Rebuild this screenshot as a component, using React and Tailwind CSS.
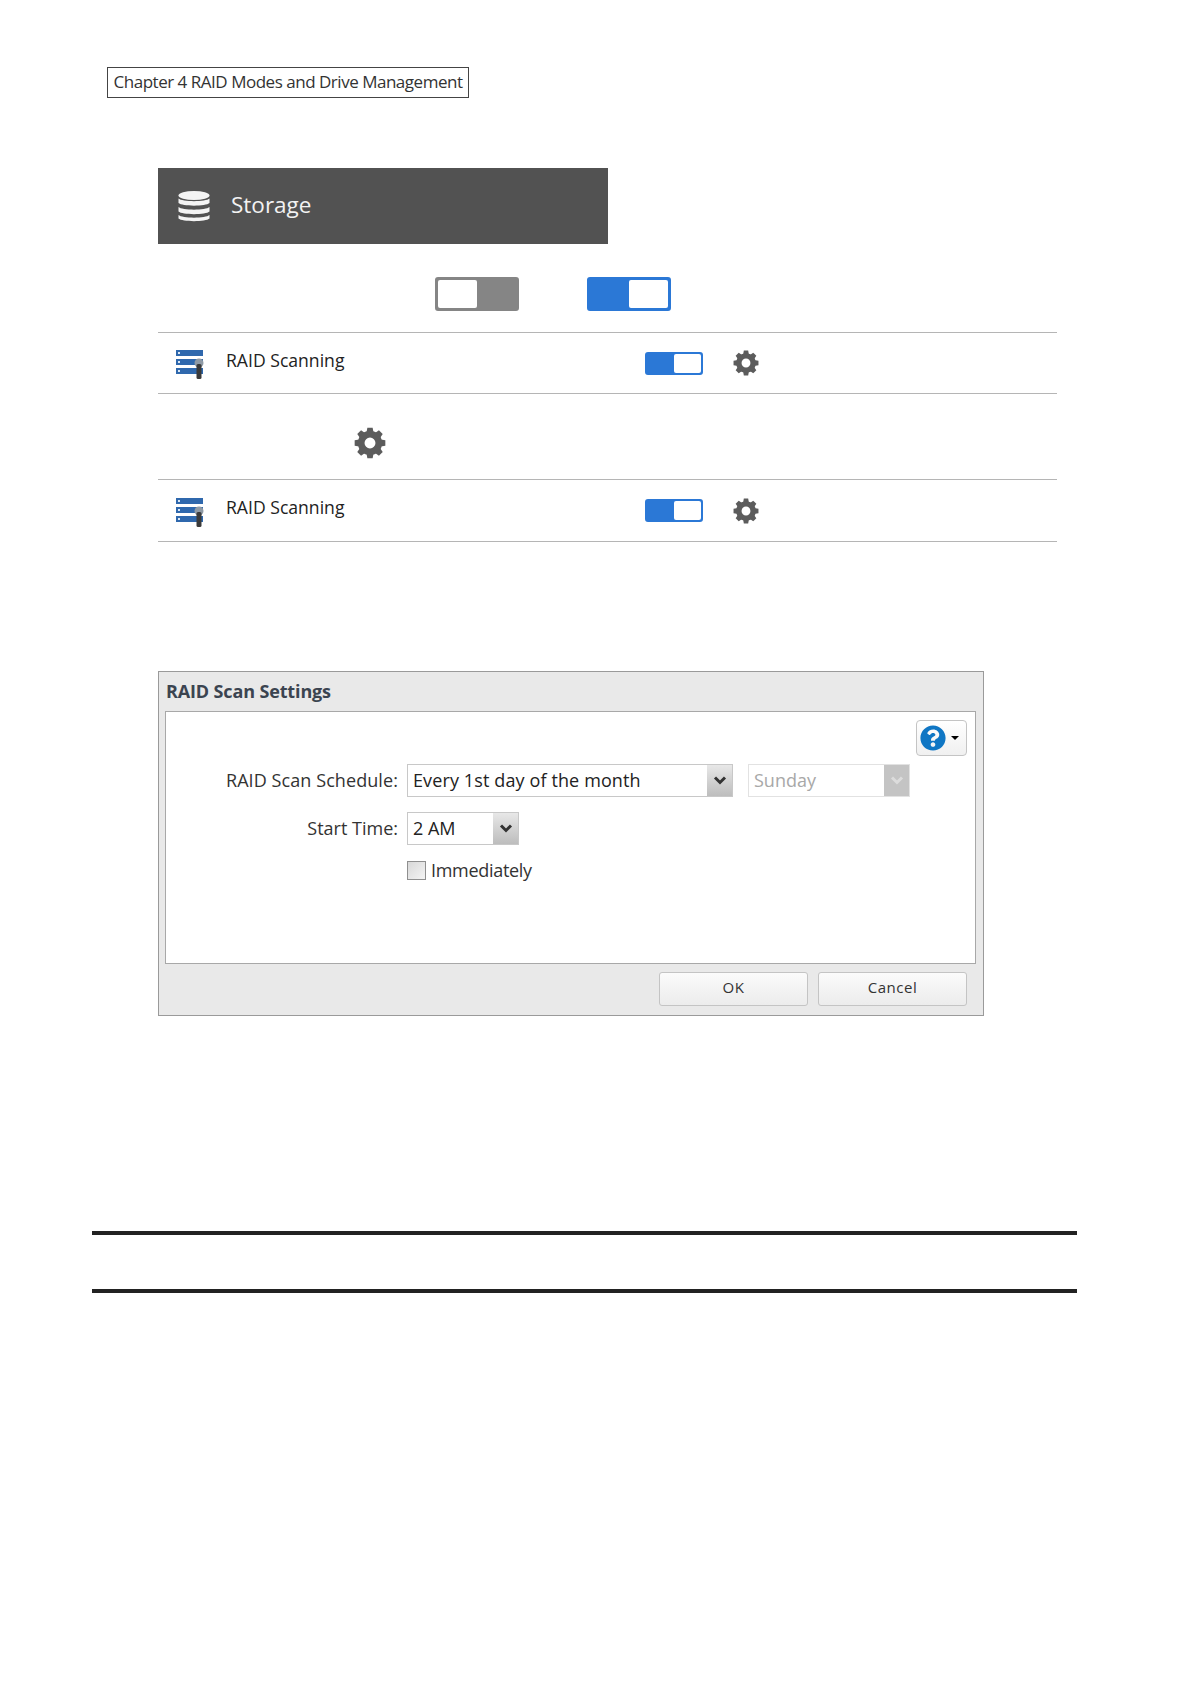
import { FaQuestionCircle } from 'react-icons/fa';

const Toggle = ({ on = true, big = false }) => {
    const size = big ? 'w-[84px] h-[34px] border-[3px]' : 'w-[58px] h-[23px] border-2';
    const color = on ? 'border-[#2b78d6] bg-[#2b78d6]' : 'border-[#858585] bg-[#858585]';
    return (
        <div className={`${size} ${color} flex rounded-[3px] ${on ? 'justify-end' : 'justify-start'}`}>
            <div className="w-1/2 h-full bg-white rounded-[2px]"></div>
        </div>
    );
};

const Gear = ({ size }) => (
    <svg width={size} height={size} viewBox="0 0 24 24" fill="#5c5c5c">
        {[0, 45, 90, 135, 180, 225, 270, 315].map((angle) => (
            <path key={angle} d="M10 0.5 H14 L15 6 H9 Z" transform={`rotate(${angle} 12 12)`} />
        ))}
        <circle cx="12" cy="12" r="6.6" fill="none" stroke="#5c5c5c" strokeWidth="5" />
    </svg>
);

const DatabaseIcon = () => (
    <svg width="32" height="32" viewBox="0 0 32 32" fill="#f4f4f4">
        <ellipse cx="16" cy="5.5" rx="15.5" ry="4.5" />
        <path d="M0.5 8.5 C4 12 28 12 31.5 8.5 V13 C28 16.5 4 16.5 0.5 13 Z" />
        <path d="M0.5 17 C4 20.5 28 20.5 31.5 17 V21.5 C28 25 4 25 0.5 21.5 Z" />
        <path d="M0.5 25 C4 28.5 28 28.5 31.5 25 V28.5 C28 32 4 32 0.5 28.5 Z" />
    </svg>
);

const ServerIcon = () => (
    <svg width="30" height="29" viewBox="0 0 30 29">
        <rect x="0" y="0" width="27" height="6" fill="#2f68ad" />
        <rect x="0" y="9" width="27" height="6" fill="#2f68ad" />
        <rect x="0" y="18" width="27" height="6" fill="#2f68ad" />
        <rect x="2" y="2" width="2" height="2" fill="#dce8f5" />
        <rect x="2" y="11" width="2" height="2" fill="#dce8f5" />
        <rect x="2" y="20" width="2" height="2" fill="#dce8f5" />
        <circle cx="23" cy="13" r="4.5" fill="#8f9aa5" />
        <rect x="20.5" y="14" width="5" height="15" rx="1.5" fill="#3a3a3a" />
    </svg>
);

const ScanRow = ({ className }) => (
    <div className={`flex items-center border-b border-[#b5b5b5] pl-[18px] ${className}`}>
        <div className="w-[50px] mt-[3px]"><ServerIcon /></div>
        <span className="w-[419px] text-[17.6px] text-[#222] font-['Open_Sans',sans-serif] mb-[6px]">RAID Scanning</span>
        <Toggle />
        <div className="ml-[30px]"><Gear size={26} /></div>
    </div>
);

const Arrow = ({ color = '#333' }) => (
    <svg width="14" height="9" viewBox="0 0 14 9">
        <path d="M2 1.5 L7 6.5 L12 1.5" fill="none" stroke={color} strokeWidth="3" />
    </svg>
);

const DialogButton = ({ label }) => (
    <button className="w-[149px] h-[34px] pb-[4px] rounded-[3px] border border-[#c4c4c4] bg-gradient-to-b from-[#fbfbfb] to-[#ececec] text-[15px] tracking-[0.5px] text-[#333]">
        {label}
    </button>
);

const App = () => {
    return (
        <div className="w-[1191px] h-[1684px] bg-white pt-[67px] font-['Noto_Sans',sans-serif]">
            <div className="ml-[107px] w-[362px] h-[31px] pb-[2px] border border-[#444] flex items-center justify-center text-[17px] text-[#333] font-['Open_Sans',sans-serif] tracking-[-0.48px] whitespace-nowrap">
                Chapter 4 RAID Modes and Drive Management
            </div>

            <div className="ml-[158px] mt-[70px] w-[899px]">
                <div className="w-[450px] h-[76px] bg-[#525252] flex items-center pl-[20px]">
                    <DatabaseIcon />
                    <span className="ml-[21px] mb-[2px] text-[22.5px] text-[#f2f2f2] font-['Open_Sans',sans-serif]">Storage</span>
                </div>

                <div className="h-[89px] border-b border-[#b5b5b5] pt-[33px] pl-[277px] flex items-start gap-[68px]">
                    <Toggle on={false} big />
                    <Toggle big />
                </div>
                <ScanRow className="h-[61px]" />
                <div className="h-[86px] border-b border-[#b5b5b5] pl-[196px] pt-[33px]">
                    <Gear size={32} />
                </div>
                <ScanRow className="h-[62px]" />
            </div>

            <div className="ml-[158px] mt-[129px] w-[826px] h-[345px] bg-[#e9e9e9] border border-[#9a9a9a] flex flex-col pl-[6px] pr-[7px] text-[#333] font-['Open_Sans',sans-serif]">
                <div className="h-[39px] flex items-center pl-[1px] text-[18px] font-bold text-[#3b4450] tracking-[-0.14px]">RAID Scan Settings</div>
                <div className="h-[253px] bg-white border border-[#a8a8a8]">
                    <div className="flex justify-end pt-[8px] pr-[8px]">
                        <div className="w-[51px] h-[36px] rounded-[4px] border border-[#c4c4c4] bg-gradient-to-b from-white to-[#f0f0f0] flex items-center pl-[3px] gap-[5px]">
                            <FaQuestionCircle className="text-[26px] text-[#0f76c4]" />
                            <div className="w-0 h-0 border-x-[4px] border-x-transparent border-t-[4px] border-t-black"></div>
                        </div>
                    </div>

                    <div className="flex items-center mt-[8px] h-[33px]">
                        <div className="w-[241px] pr-[9px] text-right text-[18px] tracking-[0.08px] whitespace-nowrap">RAID Scan Schedule:</div>
                        <div className="w-[326px] h-[33px] border border-[#c8c8c8] flex">
                            <div className="flex-1 pl-[5px] text-[18px] tracking-[0.12px] leading-[31px] text-[#222]">Every 1st day of the month</div>
                            <div className="w-[25px] bg-gradient-to-b from-[#e8e8e8] to-[#bdbdbd] flex items-center justify-center"><Arrow /></div>
                        </div>
                        <div className="ml-[15px] w-[162px] h-[33px] border border-[#e2e2e2] flex">
                            <div className="flex-1 pl-[5px] text-[18px] leading-[31px] text-[#a8a8a8]">Sunday</div>
                            <div className="w-[25px] bg-[#c4c4c4] flex items-center justify-center"><Arrow color="#dcdcdc" /></div>
                        </div>
                    </div>

                    <div className="flex items-center mt-[15px] h-[33px]">
                        <div className="w-[241px] pr-[9px] text-right text-[18px]">Start Time:</div>
                        <div className="w-[112px] h-[33px] border border-[#c8c8c8] flex">
                            <div className="flex-1 pl-[5px] text-[18px] leading-[31px] text-[#222]">2 AM</div>
                            <div className="w-[25px] bg-gradient-to-b from-[#e8e8e8] to-[#bdbdbd] flex items-center justify-center"><Arrow /></div>
                        </div>
                    </div>

                    <div className="flex items-center mt-[12px] ml-[241px]">
                        <div className="w-[19px] h-[19px] border border-[#8f8f8f] bg-gradient-to-br from-[#d8d8d8] to-[#f4f4f4]"></div>
                        <span className="ml-[5px] text-[18px] tracking-[-0.3px]">Immediately</span>
                    </div>
                </div>
                <div className="flex justify-end gap-[10px] pt-[8px] pr-[9px]">
                    <DialogButton label="OK" />
                    <DialogButton label="Cancel" />
                </div>
            </div>

            <div className="ml-[92px] mt-[215px] w-[985px] h-[4px] bg-[#222]"></div>
            <div className="ml-[92px] mt-[54px] w-[985px] h-[4px] bg-[#222]"></div>
        </div>
    );
};
export default App;
